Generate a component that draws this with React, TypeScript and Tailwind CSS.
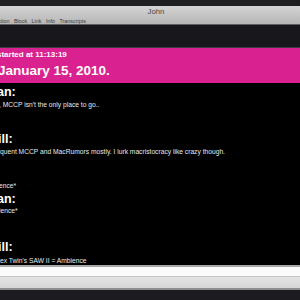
import React from "react";

export default function App() {
  const body = "text-[6.7px] leading-[8px] text-[#e8e8e8] whitespace-nowrap";
  const head = "text-[12.5px] leading-[13px] font-bold text-white whitespace-nowrap";
  return (
    <div className="w-[300px] h-[300px] overflow-hidden flex flex-col bg-[#1c1c20] font-['Liberation_Sans',Arial,sans-serif]">
      <div className="h-[6px] shrink-0 bg-[#1e1e21]" />
      <div className="h-[19px] shrink-0 bg-gradient-to-b from-[#d4d4d4] to-[#b6b6b6] border-b border-[#5e5e5e] flex flex-col items-stretch">
        <div className="h-[11px] flex items-center justify-center text-[7.8px] leading-[8px] text-[#474747] pt-[1px]">
          <span className="ml-[12px]">John</span>
        </div>
        <div className="h-[7px] flex items-center gap-[4.5px] text-[5.4px] leading-[6px] text-[#3a3a3a] -ml-[2px]">
          <span>ction</span>
          <span>Block</span>
          <span>Link</span>
          <span>Info</span>
          <span>Transcripts</span>
        </div>
      </div>
      <div className="h-[23px] shrink-0 bg-[#18181c] border-b border-[#3c3c46]" />
      <div className="h-[35px] shrink-0 bg-[#da2190] flex flex-col">
        <div className="mt-[2px] h-[10px] text-[8px] leading-[10px] font-bold text-white whitespace-nowrap -ml-[3px]">
          started at 11:13:19
        </div>
        <div className="mt-[3px] h-[16px] text-[13.5px] leading-[16px] font-bold text-white whitespace-nowrap -ml-[2px]">
          January 15, 2010.
        </div>
      </div>
      <div className="h-[182px] shrink-0 bg-black flex flex-col">
        <div className={`${head} mt-[3px] -ml-[3px]`}>an:</div>
        <div className={`${body} mt-[2px] -ml-[1px]`}>, MCCP isn't the only place to go..</div>
        <div className={`${head} mt-[24px] -ml-[2px]`}>ill:</div>
        <div className={`${body} mt-[2px]`}>quent MCCP and MacRumors mostly. I lurk macristocracy like crazy though.</div>
        <div className={`${body} mt-[26px] -ml-[1px]`}>ence*</div>
        <div className={`${head} mt-[3px] -ml-[3px]`}>an:</div>
        <div className={`${body} mt-[1px] -ml-[1px]`}>ience*</div>
        <div className={`${head} mt-[26px] -ml-[2px]`}>ill:</div>
        <div className={`${body} mt-[3px]`}>ex Twin's SAW II = Ambience</div>
      </div>
      <div className="h-[2px] shrink-0 bg-[#a9a9a9]" />
      <div className="h-[9px] shrink-0 bg-[#fbfbfb]" />
      <div className="h-[1px] shrink-0 bg-[#c4c4c4]" />
      <div className="h-[11px] shrink-0 bg-gradient-to-b from-[#e4e4e4] to-[#d6d6d6]" />
      <div className="h-[2px] shrink-0 bg-[#8c8c8c]" />
      <div className="flex-1 bg-[#1c1c20]" />
    </div>
  );
}
